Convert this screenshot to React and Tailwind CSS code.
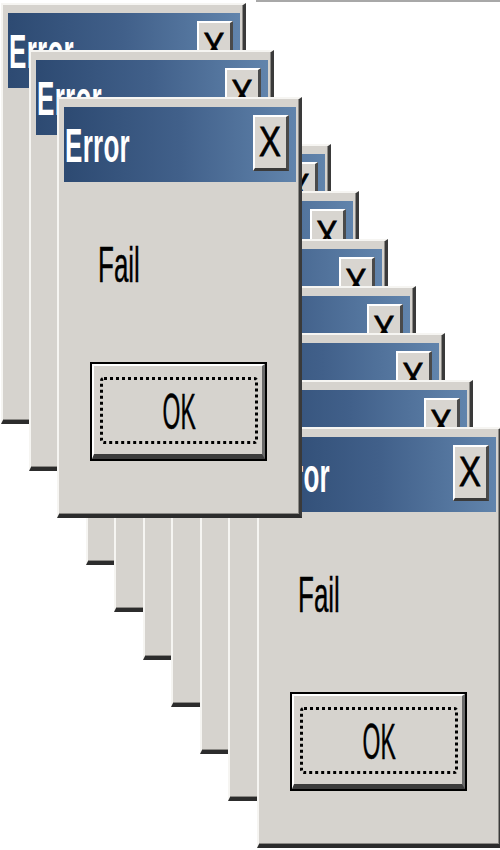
import React from "react";

const POS = {
  0: "left-[1px] top-[3px]",
  1: "left-[29px] top-[50px]",
  2: "left-[57px] top-[97px]",
  3: "left-[86px] top-[144px]",
  4: "left-[114px] top-[191px]",
  5: "left-[143px] top-[239px]",
  6: "left-[171px] top-[286px]",
  7: "left-[200px] top-[333px]",
  8: "left-[228px] top-[380px]",
  9: "left-[257px] top-[427px]",
};

function Dialog({ i }) {
  return (
    <div
      className={
        "absolute w-[245px] h-[421px] flex flex-col bg-[#d6d3ce] border-t-2 border-l-2 border-t-[#f6f5f2] border-l-[#f6f5f2] border-r-[3px] border-b-[4px] border-r-[#3a3a3a] border-b-[#2c2c2c] shadow-[inset_-1px_-1px_0_#8c8a86] " +
        POS[i]
      }
    >
      <div className="mx-[5px] mr-[3px] mt-2 h-[75px] flex items-start justify-between bg-[linear-gradient(to_right,#2d4a72,#41608a_50%,#6184ac)]">
        <span className="inline-block pl-[2px] pt-[14px] text-[49px] leading-none font-bold text-white origin-left scale-x-[0.53] tracking-[0.5px]">
          Error
        </span>
        <div className="mt-2 mr-[7px] w-9 h-14 shrink-0 flex items-center justify-center bg-[#d8d5d0] border-t-2 border-l-2 border-t-white border-l-white border-r-[3px] border-b-[3px] border-r-[#4a4a4a] border-b-[#3a3a3a]">
          <span className="inline-block text-[42px] leading-none text-black scale-x-[0.78] -translate-y-[1px] [-webkit-text-stroke:0.8px_black]">
            X
          </span>
        </div>
      </div>
      <div className="mt-[58px] pl-[39px]">
        <span className="inline-block text-[50px] leading-none text-black origin-left scale-x-[0.52] [-webkit-text-stroke:0.4px_black]">
          Fail
        </span>
      </div>
      <div className="ml-[31px] mt-[72px] w-[177px] h-[99px] border-2 border-black">
        <div className="w-full h-full flex bg-[#d6d3ce] border-t-2 border-l-2 border-t-white border-l-white border-r-[3px] border-b-[5px] border-r-[#6a6a6a] border-b-[#3c3c3c] pl-[6px] pt-[11px] pr-[4px] pb-[10px]">
          <div className="flex-1 flex items-center justify-center border-[3px] border-dotted border-black rounded-[4px]">
            <span className="inline-block text-[50px] leading-none text-black scale-x-[0.46] translate-y-[1px] [-webkit-text-stroke:0.4px_black]">
              OK
            </span>
          </div>
        </div>
      </div>
    </div>
  );
}

export default function App() {
  const order = [3, 4, 5, 6, 7, 8, 9, 0, 1, 2];
  return (
    <div className="relative w-[500px] h-[850px] overflow-hidden bg-white font-['Liberation_Sans',Arial,sans-serif]">
      <div className="absolute left-[256px] top-0 w-[244px] h-[2px] bg-[#a8a8a8]" />
      {order.map((i) => (
        <Dialog key={i} i={i} />
      ))}
    </div>
  );
}
